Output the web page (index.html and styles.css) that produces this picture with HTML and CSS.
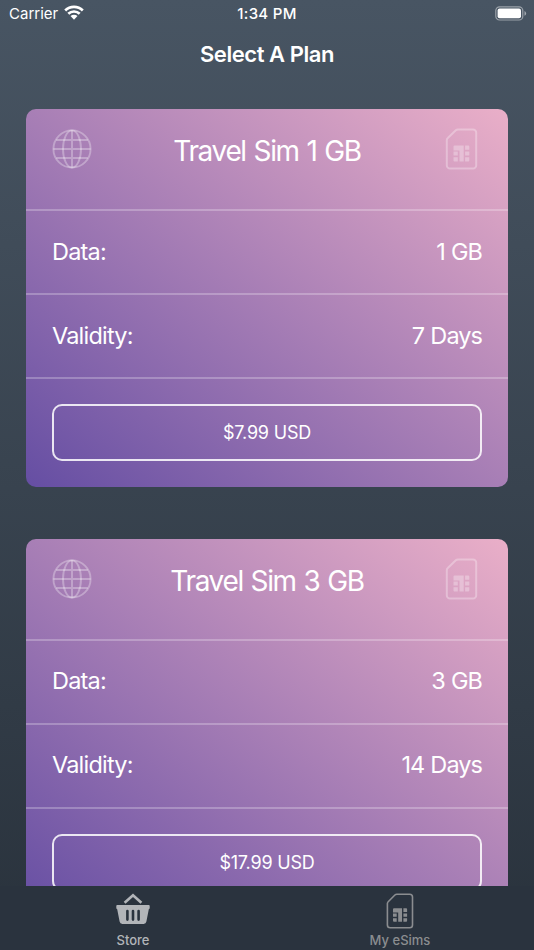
FILE: index.html
```html
<!DOCTYPE html>
<html lang="en">
   <head>
      <meta charset="utf-8">
      <title>Select A Plan</title>
      <link rel="stylesheet" href="styles.css">
   </head>
   <body>
      <!-- shared icons -->
      <svg class="defs" width="0" height="0">
         <symbol id="globe" viewBox="0 0 40 40">
            <g fill="none" stroke="currentColor" stroke-width="1.9">
               <circle cx="20" cy="20" r="18.6"/>
               <ellipse cx="20" cy="20" rx="9" ry="18.6"/>
               <path d="M20 1.4v37.2M1.4 20h37.2M4.3 11h31.4M4.3 29h31.4"/>
            </g>
         </symbol>
         <symbol id="sim" viewBox="0 0 32 42">
            <path fill="none" stroke="currentColor" stroke-width="2" stroke-linejoin="round" d="M12.5 1.4h15a3.2 3.2 0 0 1 3.2 3.2v32.8a3.2 3.2 0 0 1-3.2 3.2h-23a3.2 3.2 0 0 1-3.2-3.2V12.2q0-1.3 1-2.2l8-7.7q.9-.9 2.2-.9z"/>
            <path fill="currentColor" d="M9 17.5h9.2v16H14v-11H8v-4a1 1 0 0 1 1-1zM19.6 17.5h3.2a1 1 0 0 1 1 1v3.2h-4.2zM8 23.6h4.3v3.8H8zM19.6 23.6h4.2v3.8h-4.2zM8 29.3h4.3v4.2H9a1 1 0 0 1-1-1zM19.6 29.3h4.2v3.2a1 1 0 0 1-1 1h-3.2z"/>
         </symbol>
      </svg>

      <div class="status-bar">
         <div class="carrier">
            <span>Carrier</span>
            <svg class="wifi" viewBox="0 0 20 15">
               <g fill="none" stroke="#fff" stroke-width="2.7">
                  <path d="M1.2 5.5a12.6 12.6 0 0 1 17.6 0"/>
                  <path d="M4.3 8.8a8.2 8.2 0 0 1 11.4 0"/>
               </g>
               <path fill="#fff" d="M6.5 11.1a5 5 0 0 1 7 0L10 14.7z"/>
            </svg>
         </div>
         <div class="time">1:34 PM</div>
         <svg class="battery" viewBox="0 0 32 15">
            <rect x=".8" y=".8" width="27" height="13.2" rx="3.8" fill="none" stroke="#fff" stroke-opacity=".45" stroke-width="1.2"/>
            <rect x="2.6" y="2.6" width="23.4" height="9.6" rx="2" fill="#fff"/>
            <path d="M29.5 5v4.8a2.6 2.6 0 0 0 0-4.8z" fill="#fff" fill-opacity=".5"/>
         </svg>
      </div>
      <h1>Select A Plan</h1>

      <div class="plans">
         <div class="card">
            <div class="card-title">
               <svg class="globe"><use href="#globe"/></svg>
               <h2>Travel Sim 1 GB</h2>
               <svg class="sim"><use href="#sim"/></svg>
            </div>
            <div class="row"><span class="data">Data:</span><span class="amount">1 GB</span></div>
            <div class="row"><span class="validity">Validity:</span><span class="days">7 Days</span></div>
            <div class="buy"><button>$7.99 USD</button></div>
         </div>
         <div class="card">
            <div class="card-title">
               <svg class="globe"><use href="#globe"/></svg>
               <h2>Travel Sim 3 GB</h2>
               <svg class="sim"><use href="#sim"/></svg>
            </div>
            <div class="row"><span class="data">Data:</span><span class="amount">3 GB</span></div>
            <div class="row"><span class="validity">Validity:</span><span class="days">14 Days</span></div>
            <div class="buy"><button>$17.99 USD</button></div>
         </div>
      </div>

      <div class="tabs">
         <div class="tab active">
            <svg class="basket" viewBox="0 0 34 32">
               <path fill="none" stroke="currentColor" stroke-width="2.6" d="M8.6 9.8L17 2.2l8.4 7.6"/>
               <path fill="currentColor" fill-rule="evenodd" d="M1.2 12h31.6q.9 0 .9.9v2.2q0 .9-.9 1.2l-2.4 12.3q-.4 2.4-2.8 2.4H6.4q-2.4 0-2.8-2.4L1.2 16.3q-.9-.3-.9-1.2v-2.2q0-.9.9-.9zM10.1 18v8.6a1.3 1.3 0 0 0 2.6 0V18a1.3 1.3 0 0 0-2.6 0zM15.7 18v8.6a1.3 1.3 0 0 0 2.6 0V18a1.3 1.3 0 0 0-2.6 0zM21.3 18v8.6a1.3 1.3 0 0 0 2.6 0V18a1.3 1.3 0 0 0-2.6 0z"/>
            </svg>
            <span>Store</span>
         </div>
         <div class="tab">
            <svg class="tab-sim" viewBox="0 0 28 36">
               <path fill="none" stroke="currentColor" stroke-width="1.6" stroke-linejoin="round" d="M10.8 1.2h12.9a2.8 2.8 0 0 1 2.8 2.8v28a2.8 2.8 0 0 1-2.8 2.8H4.2A2.8 2.8 0 0 1 1.4 32V10.6q0-1.1.8-1.9l6.7-6.7q.8-.8 1.9-.8z"/>
               <path fill="currentColor" d="M8 15.2h8v13.6h-3.8v-9.4H7v-3.2a1 1 0 0 1 1-1zM17.4 15.2h2.7a1 1 0 0 1 1 1v2.7h-3.7zM7 20.4h3.7v3.4H7zM17.4 20.4h3.7v3.4h-3.7zM7 25.3h3.7v3.5H8a1 1 0 0 1-1-1zM17.4 25.3h3.7v2.5a1 1 0 0 1-1 1h-2.7z"/>
            </svg>
            <span>My eSims</span>
         </div>
      </div>
   </body>
</html>
```
FILE: styles.css
```css
* {
    box-sizing: border-box;
}
body {
    margin: 0;
    height: 950px;
    overflow: hidden;
    display: flex;
    flex-direction: column;
    background: linear-gradient(#485563, #29323c);
    color: #fff;
    font-family: Inter, "Liberation Sans", sans-serif;
}
.defs {
    position: absolute;
}
.status-bar {
    display: grid;
    grid-template-columns: 1fr auto 1fr;
    align-items: center;
    height: 27px;
    padding: 0 7px 0 9px;
    font-size: 15px;
}
.carrier {
    display: flex;
    align-items: center;
    gap: 6px;
}
.wifi {
    width: 20px;
    height: 15px;
    margin-top: -2px;
}
.time {
    margin-right: 2px;
    font-weight: 500;
    letter-spacing: 0.3px;
}
.battery {
    width: 32px;
    height: 15px;
    justify-self: end;
}
h1 {
    margin: 0;
    height: 82px;
    line-height: 55px;
    text-align: center;
    font-size: 22px;
    font-weight: 600;
    letter-spacing: -0.45px;
}
.plans {
    flex: 1;
    min-height: 0;
    overflow: hidden;
    padding: 0 26px;
}
.card {
    height: 378px;
    margin-bottom: 51.5px;
    border-radius: 10px;
    background: linear-gradient(to top right, #654ea3, #eaafc8);
}
.card-title {
    display: flex;
    justify-content: space-between;
    height: 102px;
    padding: 19px 30px 0 26px;
    border-bottom: 2px solid rgba(255, 255, 255, 0.25);
}
.globe {
    width: 40px;
    height: 40px;
    margin-top: 1px;
    color: rgba(255, 255, 255, 0.3);
}
.sim {
    width: 33px;
    height: 42px;
    color: rgba(255, 255, 255, 0.3);
}
h2 {
    margin: 0 3px 0 0;
    line-height: 46px;
    font-size: 28px;
    font-weight: 400;
    letter-spacing: -1.35px;
    word-spacing: 1.2px;
}
.row {
    display: flex;
    justify-content: space-between;
    align-items: center;
    height: 84px;
    padding: 0 26px 2px;
    border-bottom: 2px solid rgba(255, 255, 255, 0.25);
    font-size: 23.5px;
    letter-spacing: -0.8px;
    word-spacing: 0.5px;
}
.amount,
.days {
    letter-spacing: -0.95px;
}
.buy {
    padding: 25px 26px 0;
}
button {
    width: 100%;
    height: 57px;
    border: 2px solid rgba(255, 255, 255, 0.85);
    border-radius: 10px;
    background: none;
    color: #fff;
    font-family: inherit;
    font-size: 18px;
    letter-spacing: -0.2px;
}
.tabs {
    display: flex;
    height: 64px;
    background: #2a333e;
}
.tab {
    flex: 1;
    display: flex;
    flex-direction: column;
    justify-content: space-between;
    align-items: center;
    padding: 7px 1px 1px 0;
    color: #8b8d90;
    font-size: 13px;
    line-height: 17px;
    font-weight: 500;
}
.active {
    color: #b2b5b9;
}
.basket {
    width: 34px;
    height: 32px;
}
.tab-sim {
    width: 28px;
    height: 36px;
}
```
